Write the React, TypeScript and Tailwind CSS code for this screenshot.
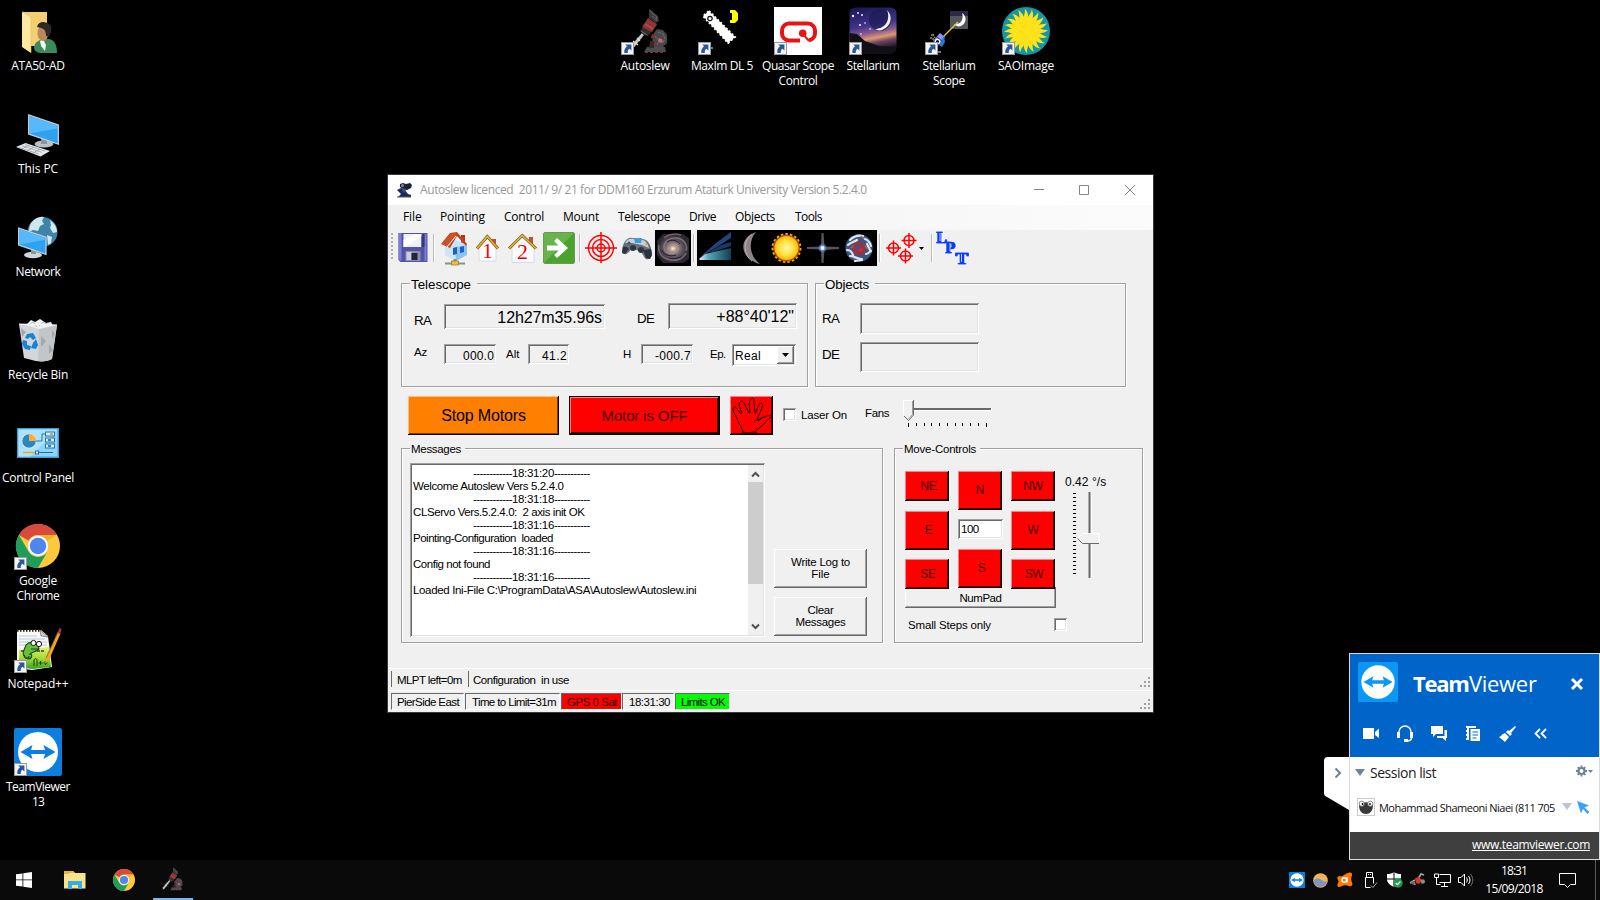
import type { ReactNode } from "react";

const SANS = "font-['Liberation_Sans',Arial,sans-serif]";
const SEGOE = "font-['Open_Sans','Noto_Sans',sans-serif]";
const SUNKEN =
  "shadow-[inset_1px_1px_#a0a0a0,inset_-1px_-1px_#ffffff,inset_2px_2px_#696969,inset_-2px_-2px_#e3e3e3]";
const RAISED =
  "shadow-[inset_-1px_-1px_#696969,inset_1px_1px_#ffffff,inset_-2px_-2px_#a0a0a0]";
const RED_BTN =
  "bg-[#ff0000] shadow-[inset_-1px_-1px_#000000,inset_1px_1px_#ff8080,inset_-2px_-2px_#5a0000]";

/* ---------- shared glyphs ---------- */

function ShortcutArrow() {
  return (
    <g transform="translate(0 35)">
      <rect x="0.5" y="0.5" width="12" height="12" fill="#f4f4f4" stroke="#9a9a9a" />
      <path d="M4.2 2.400h6.200v6.200L8.500 6.700C7 7.800 6.600 9 6.800 11H3.400C2.800 8.200 4 6 6.100 4.300Z" fill="#2b579a" />
    </g>
  );
}

function ChromeMark() {
  return (
    <g>
      <circle cx="24" cy="24" r="22" fill="#fdc93c" />
      <path d="M4.900 13A22 22 0 0 1 43 13H24a11 11 0 0 0-9.600 5.600Z" fill="#d8493e" />
      <path d="M4.900 13A22 22 0 0 0 24 46l9.500-16.500A11 11 0 0 1 14.500 29.500Z" fill="#1d9f5b" />
      <path d="M43 13H24l9.600 5.500Z" fill="#e9b32d" />
      <circle cx="24" cy="24" r="10.200" fill="#f4f6fb" />
      <circle cx="24" cy="24" r="8.200" fill="#4c87ee" />
    </g>
  );
}

function TeamViewerMark({ bg = "#0c7ede" }: { bg?: string }) {
  return (
    <g>
      <rect width="48" height="48" rx="2" fill={bg} />
      <circle cx="24" cy="24" r="20" fill="#fff" />
      <path d="M6.500 24 18.500 17l-1.500 5h14l-1.500-5L41.500 24l-12 7 1.500-5H17l1.500 5Z" fill={bg} />
    </g>
  );
}

function AutoslewMark() {
  return (
    <g>
      <path d="m21 26 2 2L11 43l-3 1 1-4Z" fill="#c4c6c8" />
      <path d="m12 34 5 4M16 31l3 3" stroke="#dadcde" strokeWidth="1.200" />
      <path d="m19 24 9-12 8 6-9 11-4-1Z" fill="#2e2e31" />
      <path d="m21 20 6-9 9 6-5 8Z" fill="#8f3535" />
      <path d="m24 17 8 5" stroke="#b24c4c" strokeWidth="1.500" />
      <path d="m20 24 6 4" stroke="#6b6b70" />
      <path d="m28 2 3 2 6 5 1 5-3 2-7-5Z" fill="#3a3a3e" />
      <path d="m29 3 2 3 5 4-1 4M31 9l4 3" stroke="#626268" fill="none" />
      <path d="m36 22 6 1 4 5v8l-5 5h-9l-1-6 2-9Z" fill="#46464b" />
      <path d="m37 25 5 2 2 5-3 5M34 29l4 5-2 4" stroke="#6e6e74" fill="none" strokeDasharray="3 1" />
      <path d="m38 31 3 1 1 3-3 1-2-2Z" fill="#c06a6a" />
      <path d="m31 27 3 1-1 4-3-1ZM34 35l2 1-1 3h-2Z" fill="#8d2b2b" />
      <path d="M26 40h18l1 5H23Z" fill="#4c4c50" />
      <path d="M24 45.500h20" stroke="#8f2d2d" strokeDasharray="3 2" />
      <path d="M29 34h4v7h-5z" fill="#2d2d31" />
    </g>
  );
}

/* ---------- desktop icons ---------- */

const desktopArt: Record<string, ReactNode> = {
  user: (
    <g>
      <path d="M9 5h24v34H9z" fill="#f3cf72" />
      <path d="m8 5 9 5v36l-9-6Z" fill="#fde7a1" />
      <path d="M8 5h1l8 5v36" stroke="#e8bf5c" strokeWidth=".6" fill="none" />
      <path d="M20 40c1-5 5-7 9-8h6c5 1 8 5 8 14H28c-5 0-8-2-8-6Z" fill="#3b8a5c" />
      <path d="m26 34 3-2 3 6-1 6-4-5Z" fill="#f1f4f4" />
      <ellipse cx="29" cy="26" rx="5.500" ry="8" fill="#b8895f" />
      <path d="M23 20c1-5 6-6 10-4 4 1 5 4 4 9l-2 5-3-1c0-5-1-8-9-9Z" fill="#2b2826" />
    </g>
  ),
  pc: (
    <g>
      <ellipse cx="30" cy="34" rx="9.500" ry="3.500" fill="#b9c2c8" />
      <path d="m27 28 6 2v4h-6z" fill="#8a949b" />
      <path d="m14 4 31 10.500v20.500L14 24.500Z" fill="#c5cdd2" />
      <path d="m15.200 5.800 28.500 9.700v17.700L15.200 23.500Z" fill="#2ba3f2" />
      <path d="m15.200 5.800 28.500 9.700v3L15.200 23.500Z" fill="#56b9fb" />
      <path d="m2 37 9.500-4L36 41l-9.500 5.500Z" fill="#e8eaec" />
      <path d="m5 37.500 20 6.500M8 35.800l20 6.500M11 34.500l20 6.500M8 39l7-4M13 41l7-4M19 43l7-4" stroke="#8f979c" strokeWidth=".7" />
    </g>
  ),
  network: (
    <g>
      <circle cx="28.500" cy="19" r="15" fill="#3f84a8" />
      <path d="M17 10c4-5 9-7 13-6l-2 4 2 3-4 2-2 5-5-1-4 2c0-4 1-7 2-9ZM36 7c4 3 7 7 7 12l-4 1-3-5 1-3ZM33 22l5 2-1 6-3 2Z" fill="#cfe8ef" />
      <ellipse cx="19" cy="42" rx="9" ry="3.200" fill="#cfd5d9" />
      <path d="M17 36h5v5h-5z" fill="#8a949b" />
      <path d="m4 14.200 28.600 9.600v18.400L4 32.600Z" fill="#c5cdd2" />
      <path d="m5.200 16 26.200 8.800v15.600L5.200 31.600Z" fill="#2ba3f2" />
      <path d="m5.200 16 26.200 8.800v2L5.200 31.600Z" fill="#56b9fb" />
    </g>
  ),
  recycle: (
    <g>
      <path d="m5 8 38 1-5 34c-4 3-16 3-20 1l-8-2Z" fill="#d3d6d8" />
      <path d="m5 8 38 1-18 3Z" fill="#f2f3f4" />
      <path d="m25 12 18-3-5 34c-4 2-9 3-14 2Z" fill="#c3c6c9" />
      <path d="m12 9 5-5 4 2 5-3 6 4 5-1 2 4-14 3Z" fill="#eef0f1" />
      <path d="m15 9 4-3 4 5M25 10l4-4 6 3" stroke="#b6babd" fill="none" />
      <path d="m38 14 3 4-3 5ZM35 28l4 6-4 4ZM27 20l5 5-5 6ZM7 12l5 4-4 5Z" fill="#a4a8ab" />
      <path d="m5 8 38 1" stroke="#f6f6f6" strokeWidth="1.200" />
      <g fill="#1683d8">
        <path d="m13 18 6-1 3 5-3 2-3-3-2 2-3-1Z" />
        <path d="m22 23 2 6-2 4-5-1 2-5Z" />
        <path d="m9 24 4 1v4l4 1-1 4-5-1-3-5Z" />
      </g>
    </g>
  ),
  panel: (
    <g>
      <rect x="3" y="9" width="42" height="30" fill="#3aa0dc" />
      <rect x="4.500" y="10.500" width="39" height="27" fill="#8fd4f7" />
      <path d="M4.500 10.500h39l-27 27h-12Z" fill="#aee2fb" />
      <circle cx="15" cy="22" r="7.200" fill="#2c86c4" stroke="#e9f6fd" strokeWidth=".8" />
      <path d="M15 22v-7.200a7.200 7.200 0 0 1 7.200 7.200Z" fill="#fbb030" />
      <path d="M22 22h6v-7h3" stroke="#2476ae" fill="none" />
      <g fill="#cfeefd" stroke="#2476ae">
        <rect x="31.500" y="13" width="9" height="4" />
        <rect x="31.500" y="19" width="9" height="4" />
        <rect x="31.500" y="25" width="9" height="4" />
      </g>
      <path d="M36 15h3" stroke="#f28a1c" strokeWidth="1.500" />
      <path d="M34 21h3M34 27h3" stroke="#135a94" strokeWidth="1.500" />
      <path d="M9 33.500h14" stroke="#f7a11b" strokeWidth="1.500" />
      <path d="M23 33.500h16" stroke="#1d6ca8" />
      <rect x="21.500" y="32" width="3" height="3" fill="#fff" stroke="#1d6ca8" />
    </g>
  ),
  chrome: <ChromeMark />,
  notepad: (
    <g>
      <defs>
        <linearGradient id="grass" x1="0" y1="0" x2="0" y2="1">
          <stop offset="0" stopColor="#e4f26a" />
          <stop offset=".5" stopColor="#a4dc34" />
          <stop offset="1" stopColor="#36a324" />
        </linearGradient>
      </defs>
      <path d="M3 5h24l7 6 4 31-20 3-15-2Z" fill="#f7f7f4" />
      <path d="M3 5.500h23" stroke="#222" strokeWidth="2.500" strokeDasharray="1.500 1.500" />
      <path d="m26 5 1 6 7 1Z" fill="#cfcfcf" stroke="#555" strokeWidth=".6" />
      <path d="M5 11h18M5 14h26M5 17h28M5 20h28" stroke="#a8c4d8" strokeWidth=".8" />
      <path d="m5 25 30-3 2 20-19 2-13-2Z" fill="url(#grass)" />
      <path d="M7 26h24" stroke="#4a3a52" strokeWidth="1.500" strokeDasharray="3 1" />
      <path d="M12 20c3-4 9-3 12 0l1 4c-3 3-7 3-9 5 3 0 2 5-2 5-4-1-6-5-4-9Z" fill="#68bf3d" stroke="#1d4a12" strokeWidth="1.100" />
      <path d="M10 30c1 4 5 4 5 1M17 24h8" stroke="#1d4a12" fill="none" strokeWidth="1.200" />
      <g fill="#fff" stroke="#111" strokeWidth="1">
        <circle cx="19.500" cy="18" r="2.600" />
        <circle cx="25" cy="19" r="2.600" />
      </g>
      <path d="M20 41v-6c1-2 3-2 3 1v5M24.500 38h4M26.500 36v4M29.500 38h4M31.500 36v4" stroke="#143d0c" fill="none" />
      <path d="m32 33 12-26 2.500 1.500L35 35l-4 4Z" fill="#f0a52a" />
      <path d="m32 33 12-26" stroke="#8a5a12" strokeWidth=".8" />
      <path d="m43.500 8 2-5 2 1-1.500 5Z" fill="#a04040" />
    </g>
  ),
  teamviewer: <TeamViewerMark />,
  autoslew: <AutoslewMark />,
  maxim: (
    <g>
      <path d="m11 4 26 26-7 6L5 9Z" fill="#fff" />
      <path d="m11 4 26 26-7 6L5 9Z" fill="none" stroke="#fff" strokeDasharray="2 2" strokeWidth="2" />
      <circle cx="12" cy="11.500" r="2.200" fill="#fff" stroke="#111" strokeWidth="1.200" />
      <path d="M32 3h5l3 3v7l-3 3h-5v-3h2V6h-2Z" fill="#ff0" />
      <path d="M12 41h3" stroke="#0aa" strokeWidth="2" />
    </g>
  ),
  quasar: (
    <g>
      <rect width="48" height="48" fill="#fff" />
      <path d="M26 33.500H15a7 7 0 0 1-7-7v-3a7 7 0 0 1 7-7h19a7 7 0 0 1 7 7v3a7 7 0 0 1-6 6.700" fill="none" stroke="#e81414" strokeWidth="4" />
      <circle cx="28.700" cy="26.300" r="3.800" fill="#e81414" />
      <path d="m29 27 6 7" stroke="#e81414" strokeWidth="2" />
    </g>
  ),
  stellarium: (
    <g>
      <defs>
        <linearGradient id="sky" x1="0" y1="0" x2="0.200" y2="1">
          <stop offset="0" stopColor="#17164f" />
          <stop offset=".45" stopColor="#40328a" />
          <stop offset=".62" stopColor="#8a5a8e" />
          <stop offset=".74" stopColor="#e09a72" />
          <stop offset=".84" stopColor="#6b4560" />
          <stop offset="1" stopColor="#1b1620" />
        </linearGradient>
      </defs>
      <rect x=".500" y=".500" width="47" height="46" rx="6" fill="url(#sky)" />
      <path d="M.5 26 8 27l8 7 14 5 17 1v1a6 6 0 0 1-6 6H6.500a6 6 0 0 1-6-6Z" fill="#121016" />
      <circle cx="31" cy="13" r="11" fill="#1b1b56" opacity=".7" />
      <path d="M38 3c6 6 5 16-5 20-3 1-5 0-7-1 10 0 16-9 12-19Z" fill="#f6f4ee" />
      <g fill="#fff">
        <circle cx="4" cy="9" r="1.200" />
        <circle cx="9" cy="6" r=".9" />
        <circle cx="13" cy="8" r=".9" />
        <circle cx="11" cy="18" r="1" />
        <circle cx="16" cy="16" r=".8" />
        <circle cx="12" cy="27" r=".8" />
        <circle cx="21" cy="22" r=".8" />
      </g>
    </g>
  ),
  scope: (
    <g>
      <rect x="25" y="4" width="18" height="18" fill="#55555a" />
      <path d="M25 4h18v5H25z" fill="#2b2747" />
      <path d="M37 6c5 3 5 10-1 13-3 1-5 0-7-2 7 1 10-5 8-11Z" fill="#fff" />
      <path d="M18 30 33 15" stroke="#d8cf3e" strokeWidth="1.300" />
      <path d="m8 34 7-8 5 4-6 8Z" fill="#8f93f5" />
      <path d="m14 38 5-9 1 6-3 5Z" fill="#1f7fd0" />
      <path d="m9 33 5 5M12 30l5 4" stroke="#3f49c8" strokeWidth="1.200" />
      <path d="M6 28h3M5 31h3v3M8 27l2 4" stroke="#ddd23a" fill="none" strokeDasharray="2 1" />
      <circle cx="12.500" cy="34.500" r="2.200" fill="#111" stroke="#fff" strokeWidth="1.200" />
      <path d="M13 45h3" stroke="#777" strokeWidth="2" />
    </g>
  ),
  sao: (
    <g>
      <circle cx="24" cy="24" r="24" fill="#1297a8" />
      <g fill="#ffe21a">
        {Array.from({ length: 20 }, (_, i) => (
          <path key={i} d="M21.400 13C21.600 8 23.600 6 22.800 1.800 26 5 26.400 8 26.600 13Z" transform={`rotate(${i * 18} 24 24)`} />
        ))}
        <circle cx="24" cy="24" r="13.500" />
      </g>
    </g>
  ),
};

type Shortcut = { art: string; lines: [string, string][]; left: string; top: string; link?: boolean };

const shortcuts: Shortcut[] = [
  { art: "user", lines: [["ATA50-AD", "tracking-[-0.27px]"]], left: "left-0", top: "top-[7px]" },
  { art: "pc", lines: [["This PC", "tracking-[-0.09px]"]], left: "left-0", top: "top-[110px]" },
  { art: "network", lines: [["Network", "tracking-[-0.4px]"]], left: "left-0", top: "top-[213px]" },
  { art: "recycle", lines: [["Recycle Bin", "tracking-[-0.24px]"]], left: "left-0", top: "top-[316px]" },
  { art: "panel", lines: [["Control Panel", "tracking-[-0.28px]"]], left: "left-0", top: "top-[419px]" },
  { art: "chrome", lines: [["Google", "tracking-[-0.24px]"], ["Chrome", "tracking-[-0.31px]"]], left: "left-0", top: "top-[522px]", link: true },
  { art: "notepad", lines: [["Notepad++", "tracking-[-0.15px]"]], left: "left-0", top: "top-[625px]", link: true },
  { art: "teamviewer", lines: [["TeamViewer", "tracking-[-0.5px]"], ["13", "tracking-[-0.9px]"]], left: "left-0", top: "top-[728px]", link: true },
  { art: "autoslew", lines: [["Autoslew", "tracking-[-0.28px]"]], left: "left-[607px]", top: "top-[7px]", link: true },
  { art: "maxim", lines: [["MaxIm DL 5", "tracking-[-0.43px]"]], left: "left-[684px]", top: "top-[7px]", link: true },
  { art: "quasar", lines: [["Quasar Scope", "tracking-[-0.45px]"], ["Control", "tracking-[-0.37px]"]], left: "left-[760px]", top: "top-[7px]", link: true },
  { art: "stellarium", lines: [["Stellarium", "tracking-[-0.37px]"]], left: "left-[835px]", top: "top-[7px]", link: true },
  { art: "scope", lines: [["Stellarium", "tracking-[-0.37px]"], ["Scope", "tracking-[-0.33px]"]], left: "left-[911px]", top: "top-[7px]", link: true },
  { art: "sao", lines: [["SAOImage", "tracking-[-0.24px]"]], left: "left-[988px]", top: "top-[7px]", link: true },
];

function DesktopIcon({ art, lines, left, top, link }: Shortcut) {
  return (
    <div className={`absolute flex w-[76px] flex-col items-center ${left} ${top}`}>
      <svg width="48" height="48" viewBox="0 0 48 48">
        {desktopArt[art]}
        {link && <ShortcutArrow />}
      </svg>
      <div className="mt-[3px] text-center text-[12px] leading-[15px] whitespace-nowrap text-white">
        {lines.map(([text, tracking]) => (
          <div key={text} className={tracking}>{text}</div>
        ))}
      </div>
    </div>
  );
}

/* ---------- window chrome ---------- */

function TitleBar() {
  return (
    <div className="flex h-[30px] items-center bg-white">
      <svg className="ml-[8px]" width="17" height="16" viewBox="0 0 17 16">
        <path d="m4 2 3-1 3 1 4-1 2 2-1 3-4 2-4-1-3-2Z" fill="#1b2138" />
        <path d="m1 8 4-2 4 2 3 4 3 1v2H2l3-3Z" fill="#1a2a55" />
        <path d="m7 6 3 1-1 4-3-2Z" fill="#35508f" />
        <circle cx="6.500" cy="3.500" r="1.500" fill="#7d8aa8" />
        <path d="M1 15h14" stroke="#555" />
      </svg>
      <span className="ml-[7px] text-[12px] leading-[16px] tracking-[-0.4px] whitespace-pre text-[#999999]">
        {"Autoslew licenced  2011/ 9/ 21 for DDM160 Erzurum Ataturk University Version 5.2.4.0"}
      </span>
      <svg className="mr-[17px] ml-auto" width="102" height="12" viewBox="0 0 102 12" fill="none" stroke="#858585">
        <path d="M0 5.500h10M45.500 1.500h9v9h-9zM91 1l10 10M101 1 91 11" />
      </svg>
    </div>
  );
}

const menu: [string, string][] = [
  ["File", "w-[37px] tracking-[-0.12px]"],
  ["Pointing", "w-[64px] tracking-[-0.13px]"],
  ["Control", "w-[59px] tracking-[-0.22px]"],
  ["Mount", "w-[55px] tracking-[-0.2px]"],
  ["Telescope", "w-[71px] tracking-[-0.43px]"],
  ["Drive", "w-[46px] tracking-[-0.47px]"],
  ["Objects", "w-[60px] tracking-[-0.31px]"],
  ["Tools", "w-[46px] tracking-[-0.56px]"],
];

function MenuBar() {
  return (
    <div className="flex h-[25px] items-center bg-gradient-to-r from-[#f0f0f0] to-[#fbfbfb] pb-[2px] pl-[15px] text-[12px] leading-[17px] text-black">
      {menu.map(([name, style]) => (
        <span key={name} className={style}>{name}</span>
      ))}
    </div>
  );
}

function Tool({ children, className = "w-[36px]" }: { children: ReactNode; className?: string }) {
  return <svg className={`h-[36px] shrink-0 ${className}`}>{children}</svg>;
}

function Divider() {
  return (
    <div className="flex h-[36px] w-[6px] justify-center py-[4px]">
      <div className="w-[2px] border-r border-l border-r-white border-l-[#bdbdbd]" />
    </div>
  );
}

function Target({ x, y }: { x: number; y: number }) {
  return (
    <g transform={`translate(${x} ${y})`} stroke="#f00" strokeWidth="1.500" fill="none">
      <circle r="5" />
      <path d="M-7.500 0h15M0-7.500v15" />
    </g>
  );
}

function Toolbar() {
  return (
    <div className="flex h-[37px] items-start bg-[#f0f0f0] pl-[2px]">
      <svg width="5" height="36">
        <path d="M2 3v28" stroke="#b0b0b0" strokeWidth="2" strokeDasharray="2 2" />
      </svg>
      <Tool>
        <g transform="translate(-.5 0)">
          <path d="M4 3h29v29H6l-2-2Z" fill="#5252a8" />
          <path d="M4 3h3v28l-3-2ZM30 4h2v27h-2z" fill="#7d7fd0" />
          <path d="M9 4h18v13H9z" fill="#eef1fb" />
          <path d="M27 4h3v13h-3z" fill="#37378a" />
          <path d="M9 10 21 4h6v2L11 17H9Z" fill="#fff" />
          <path d="M11 21h15v10H11z" fill="#8c93a8" />
          <path d="M12 22h5v8h-5z" fill="#c9ceda" />
          <path d="M17 23h6v7h-6z" fill="#23233c" />
        </g>
      </Tool>
      <Divider />
      <Tool>
        <path d="M24 5h4v9h-4z" fill="#b4391c" />
        <path d="M8 17 13 7l17 8v10l-11 6-11-6Z" fill="#c8e6f8" />
        <path d="m18 17 12-2v10l-11 6Z" fill="#8cc4ec" />
        <path d="m4 14 9-11 7-1 10 12-1 2-9-10-7 12Z" fill="#c2411d" />
        <path d="m5 14 9-11h6L12 17Z" fill="#cc5228" />
        <path d="m10 17 9-11" stroke="#fff" />
        <path d="m16 18 4-1v7l-4 1zM23 17l4-1v6l-4 1z" fill="#1f5fc4" />
        <path d="M18 29v3" stroke="#8b8f95" strokeWidth="3" />
        <path d="M8 33.500h20" stroke="#8b8f95" strokeWidth="2" />
        <rect x="14.500" y="31" width="7" height="4" fill="#f0c22d" stroke="#8c7117" strokeWidth=".6" />
      </Tool>
      <Tool className="w-[34px]">
        <path d="M19 9h4v7h-4z" fill="#c94b37" />
        <path d="M6 17 14.300 8 23 17v14H6Z" fill="#fbfbff" stroke="#cfd3e6" strokeWidth=".8" />
        <path d="M4 18.500 14.300 6.500 25 18.500" fill="none" stroke="#7a5a10" strokeWidth="3" />
        <path d="M4 18.500 14.300 6.500 25 18.500" fill="none" stroke="#e5b33b" strokeWidth="1.600" />
        <text x="14.500" y="28" textAnchor="middle" fontSize="20" fill="#e80000" className="font-['Liberation_Serif',serif]">1</text>
      </Tool>
      <Tool className="w-[34px]">
        <path d="M22 7h4v9h-4z" fill="#c94b37" />
        <path d="M5 17 15.300 6 27 17v15.500H5Z" fill="#fbfbff" stroke="#cfd3e6" strokeWidth=".8" />
        <path d="M2 18.500 15.300 5.500 29 18.500" fill="none" stroke="#7a5a10" strokeWidth="3" />
        <path d="M2 18.500 15.300 5.500 29 18.500" fill="none" stroke="#e5b33b" strokeWidth="1.600" />
        <text x="15.500" y="29" textAnchor="middle" fontSize="22" fill="#e80000" className="font-['Liberation_Serif',serif]">2</text>
      </Tool>
      <Tool>
        <rect x="2.500" y="2.500" width="31" height="31" rx="1.500" fill="#4aa32d" stroke="#6b9a58" />
        <path d="M3 3h30L3 33Z" fill="#7fbf5e" opacity=".6" />
        <path d="M6 15.500h11.500L13 11l3-3 11 10-11 10-3-3 4.500-4.500H6Z" fill="#fff" />
      </Tool>
      <Divider />
      <Tool>
        <g fill="none" stroke="#f00" strokeWidth="1.500">
          <circle cx="18" cy="18" r="12.500" />
          <circle cx="18" cy="18" r="8.500" />
          <circle cx="18" cy="18" r="4" />
          <path d="M2 18h32M18 2v31" />
        </g>
      </Tool>
      <Tool>
        <path d="M3 21C4 12 8 7 13 8l10 1c6 0 9 6 10 14 0 5-3 7-6 6-3-2-3-6-6-8l-8-2c-3 2-4 6-8 5-2-1-2-2-2-3Z" fill="#66717f" />
        <path d="M6 13c2-4 5-5 8-4l10 1c3 1 5 4 6 8l-7-3-10-2Z" fill="#c6cfda" />
        <path d="M4 17c2-1 5 0 6 2l-4 5-3-1ZM24 20l8-1 1 6-2 4-4-1Z" fill="#2d333c" />
        <path d="M15 8h8l-1 5h-6z" fill="#3ba0d6" />
        <circle cx="14" cy="18" r="3" fill="#30363f" />
        <circle cx="22" cy="20" r="3" fill="#30363f" />
        <circle cx="27" cy="14" r="1.200" fill="#e4b52e" />
        <circle cx="10" cy="13" r="1.500" fill="#47505c" />
      </Tool>
      <Tool className="w-[36px] bg-black">
        <defs>
          <radialGradient id="galaxy">
            <stop offset="0" stopColor="#fff4dc" />
            <stop offset=".2" stopColor="#b39a8c" />
            <stop offset=".6" stopColor="#5d5260" />
            <stop offset="1" stopColor="#2b2730" />
          </radialGradient>
        </defs>
        <path d="M8 4h20l6 4v21l-6 4H8l-6-8V11Z" fill="url(#galaxy)" />
        <g fill="none" stroke="#a8979c" opacity=".55" strokeWidth="1.400">
          <path d="M18 14c5 0 7 4 4 7-4 4-12 3-13-3S15 7 22 8s11 7 9 13M9 8c4-4 12-5 17-3" />
          <path d="M18 22c-4 0-6-2-5-5M4 15c-2 8 4 14 12 15 7 1 13-2 15-7" />
        </g>
        <path d="M7 20c1 5 8 7 14 5M12 12c4-3 10-2 13 2M27 26c-4 3-9 3-13 2" fill="none" stroke="#221d29" />
      </Tool>
      <Divider />
      <div className="flex bg-black">
        <Tool>
          <defs>
            <linearGradient id="tail" x1="0" x2="1">
              <stop offset="0" stopColor="#d8fbff" />
              <stop offset=".3" stopColor="#55a5b8" />
              <stop offset="1" stopColor="#123f52" />
            </linearGradient>
          </defs>
          <path d="m3 27 16-14L34 2v6L20 17Z" fill="#25457a" />
          <path d="m12 22 12-7 10-3v4l-18 6Z" fill="#1b3564" />
          <path d="m2 29 6-5 26-6v12H3Z" fill="url(#tail)" />
        </Tool>
        <Tool>
          <path d="M23 2C5 8 6 28 27 34 16 26 15 11 23 2Z" fill="#8f8589" />
          <path d="M19 4c-9 6-9 21 0 27" stroke="#bdb3b6" fill="none" />
        </Tool>
        <Tool>
          <defs>
            <radialGradient id="sun">
              <stop offset="0" stopColor="#fff9a8" />
              <stop offset=".6" stopColor="#ffdf3c" />
              <stop offset="1" stopColor="#ffae00" />
            </radialGradient>
          </defs>
          <circle cx="17.500" cy="18" r="13.700" fill="none" stroke="#f6a800" strokeWidth="2.500" strokeDasharray="2.500 2" />
          <circle cx="17.500" cy="18" r="12.700" fill="url(#sun)" stroke="#b94d00" strokeWidth="1.300" />
        </Tool>
        <Tool>
          <path d="M16.500 3h2l1 13.500L34 17v2l-14.500 1-1 13h-2L16 19.500 2 19v-2l14-.5Z" fill="#55555c" />
          <circle cx="17.500" cy="18" r="3.800" fill="#5c8ee8" opacity=".8" />
          <circle cx="17.500" cy="18" r="2" fill="#fff" />
        </Tool>
        <Tool>
          <circle cx="18" cy="18" r="13.700" fill="#3c5680" />
          <g fill="none" stroke="#dfe5ee" strokeWidth="2.200" strokeLinecap="round">
            <path d="M9 10c3-3 8-5 13-4M7 15c3-3 6-3 9-5M24 9c3 1 5 4 6 7M6 20c3 0 5 2 6 5M9 26c4 0 7 3 12 3M25 24c2 0 3-2 5-3M14 31l7-1M26 14l3 6" />
          </g>
          <path d="m10 18 4-3M24 16l3 3M20 6l3 3" stroke="#a46e52" strokeWidth="1.500" />
          <circle cx="18" cy="18.500" r="5" fill="none" stroke="#f01010" strokeWidth="2" />
          <circle cx="19.500" cy="20" r="1.800" fill="#e22" />
        </Tool>
      </div>
      <Divider />
      <Tool>
        <Target x={10.500} y={18} />
        <Target x={26} y={10.500} />
        <Target x={22.500} y={26} />
      </Tool>
      <svg width="10" height="36">
        <path d="M0 17h5l-2.500 3Z" fill="#000" />
      </svg>
      <Divider />
      <Tool className="w-[36px] drop-shadow-[1px_0_#ffffff]">
        <g
          className="font-['Liberation_Serif',serif] font-bold drop-shadow-[1px_0_#0a3cff]"
          fontSize="16"
          fill="#0a3cff"
          stroke="#0a3cff"
          strokeWidth=".5"
        >
          <text x="1" y="12.500">L</text>
          <text x="10" y="23">P</text>
          <text x="20" y="33.500" textLength="13" lengthAdjust="spacingAndGlyphs">T</text>
        </g>
        <path d="M5 3v8M15 13v8M26.500 24v8" stroke="#e8eeff" strokeWidth=".8" />
      </Tool>
    </div>
  );
}

/* ---------- form widgets ---------- */

function Group({ title, titleClass, className, children }: { title: string; titleClass: string; className: string; children: ReactNode }) {
  return (
    <div className={`relative border border-[#a0a0a0] shadow-[1px_1px_#ffffff,inset_1px_1px_#ffffff] ${className}`}>
      <span className={`absolute bg-[#f0f0f0] whitespace-nowrap ${titleClass}`}>{title}</span>
      {children}
    </div>
  );
}

function Field({ children, className }: { children?: ReactNode; className: string }) {
  return <div className={`flex shrink-0 justify-end ${SUNKEN} ${className}`}>{children}</div>;
}

function Checkbox({ className = "" }: { className?: string }) {
  return <div className={`h-[13px] w-[13px] shrink-0 bg-white ${SUNKEN} ${className}`} />;
}

function TelescopeGroup() {
  return (
    <Group
      title="Telescope"
      titleClass="-top-[7px] left-[8px] w-[67px] pl-[1px] text-[13.33px] leading-[16px]"
      className="h-[104px] w-[407px] pt-[19px] pl-[12px]"
    >
      <div className="flex items-start text-[13.33px] leading-[16px]">
        <span className="mt-[10px] w-[30px] tracking-[-0.51px]">RA</span>
        <Field className="mt-[1px] h-[25px] w-[161px] pt-[5px] pr-[3px] text-[16px] leading-[18px] tracking-[-0.1px]">12h27m35.96s</Field>
        <span className="mt-[8px] ml-[32px] w-[31px] tracking-[-0.51px]">DE</span>
        <Field className="h-[26px] w-[129px] pt-[5px] pr-[3px] text-[16px] leading-[18px] tracking-[-0.02px]">+88°40'12"</Field>
      </div>
      <div className="mt-[15px] flex items-start text-[11.5px] leading-[13px]">
        <span className="mt-[2px] w-[30px] tracking-[-0.21px]">Az</span>
        <Field className="h-[20px] w-[52px] pt-[6px] pr-[2px] text-[12px] tracking-[0.19px]">000.0</Field>
        <span className="mt-[4px] ml-[10px] w-[22px]">Alt</span>
        <Field className="h-[20px] w-[41px] pt-[6px] pr-[2px] text-[12px] tracking-[0.41px]">41.2</Field>
        <span className="mt-[4px] ml-[54px] w-[18px]">H</span>
        <Field className="h-[20px] w-[52px] pt-[6px] pr-[2px] text-[12px] tracking-[0.33px]">-000.7</Field>
        <span className="mt-[4px] ml-[17px] w-[22px] tracking-[-0.5px]">Ep.</span>
        <div className={`flex h-[22px] w-[64px] justify-between bg-white p-[2px] ${SUNKEN}`}>
          <span className="pt-[4px] pl-[1px] text-[12px] tracking-[0.33px]">Real</span>
          <span className={`flex w-[17px] items-center justify-center bg-[#f0f0f0] ${RAISED}`}>
            <svg width="7" height="4"><path d="M0 0h7L3.500 4Z" /></svg>
          </span>
        </div>
      </div>
    </Group>
  );
}

function ObjectsGroup() {
  return (
    <Group
      title="Objects"
      titleClass="-top-[7px] left-[8px] w-[51px] pl-[1px] text-[13.33px] leading-[16px] tracking-[-0.17px]"
      className="ml-[7px] h-[104px] w-[311px] pt-[19px] pl-[6px]"
    >
      <div className="flex items-start text-[13.33px] leading-[16px] tracking-[-0.51px]">
        <span className="mt-[8px] w-[38px]">RA</span>
        <Field className="h-[31px] w-[119px]" />
      </div>
      <div className="mt-[8px] flex items-start text-[13.33px] leading-[16px] tracking-[-0.51px]">
        <span className="mt-[5px] w-[38px]">DE</span>
        <Field className="h-[30px] w-[119px]" />
      </div>
    </Group>
  );
}

function MotorRow() {
  return (
    <div className="mt-[9px] flex h-[39px] items-start pl-[20px] text-[11.5px] leading-[13px]">
      <button className="h-[39px] w-[151px] bg-[#ff8000] text-[16px] tracking-[-0.16px] shadow-[inset_-1px_-1px_#000000,inset_1px_1px_#ffc080,inset_-2px_-2px_#804000]">
        Stop Motors
      </button>
      <button className="ml-[10px] h-[39px] w-[151px] border border-black bg-[#ff0000] text-[15px] tracking-[-0.13px] text-[#400000] shadow-[inset_-1px_-1px_#000000,inset_1px_1px_#ff8080,inset_-2px_-2px_#5a0000]">
        Motor is OFF
      </button>
      <button className={`ml-[10px] h-[39px] w-[43px] ${RED_BTN}`}>
        <svg width="43" height="39" viewBox="0 0 43 39" fill="none" stroke="#000" strokeWidth=".9">
          <path d="M13 37c0-5-4-8-5-12-1-4-5-8-5-12 1-3 3-2 4 0l4 5 1-1c-2-5-4-9-2-11s4 0 5 3l4 8h1c0-5-2-11 1-14 2-2 3 0 3 3l1 11h1c1-4 2-9 5-10 2 0 2 2 1 5l-4 9c-1 4 0 4 3 2 4-3 8-4 11-3-4 3-8 9-14 13-3 2-3 2-3 4M12 36l6 1 5-1 4 1M24 25c4-1 6-2 9-4" />
        </svg>
      </button>
      <Checkbox className="mt-[12px] ml-[10px]" />
      <span className="mt-[13px] ml-[5px] w-[64px] tracking-[-0.16px]">Laser On</span>
      <span className="mt-[11px] w-[35px] tracking-[-0.39px]">Fans</span>
      <svg className="mt-[3px]" width="96" height="32" viewBox="0 0 96 32">
        <path d="M5 10h86" stroke="#696969" strokeWidth="2" />
        <path d="M5 11.500h86.500V9" stroke="#fff" fill="none" />
        <path d="M3.500 1.500h10V16l-5 5-5-5Z" fill="#f0f0f0" />
        <path d="M13.500 1v15l-5 5.500L4 17" fill="none" stroke="#696969" />
        <path d="M12.500 2v13.500l-4 4.500" fill="none" stroke="#a0a0a0" />
        <path d="M3.500 16V1.500H13" fill="none" stroke="#fff" />
        <path d="M8.500 24v4M16.500 24v3M24.500 24v3M31.500 24v3M39.500 24v3M47.500 24v3M55.500 24v3M62.500 24v3M70.500 24v3M78.500 24v3M86.500 24v4" stroke="#000" />
      </svg>
    </div>
  );
}

const log: { time: string; text: string; style: string }[] = [
  { time: "18:31:20", text: "Welcome Autoslew Vers 5.2.4.0", style: "tracking-[-0.38px]" },
  { time: "18:31:18", text: "CLServo Vers.5.2.4.0:  2 axis init OK", style: "tracking-[-0.41px]" },
  { time: "18:31:16", text: "Pointing-Configuration  loaded", style: "tracking-[-0.49px]" },
  { time: "18:31:16", text: "Config not found", style: "tracking-[-0.46px]" },
  { time: "18:31:16", text: "Loaded Ini-File C:\\ProgramData\\ASA\\Autoslew\\Autoslew.ini", style: "tracking-[-0.34px]" },
];

function MessagesGroup() {
  return (
    <Group
      title="Messages"
      titleClass="-top-[6px] left-[8px] w-[55px] pl-[1px] text-[11.5px] leading-[13px] tracking-[-0.3px]"
      className="flex h-[195px] w-[482px] items-start pl-[8px] text-[11.5px] leading-[13px]"
    >
      <div className={`mt-[14px] flex h-[174px] w-[355px] justify-between bg-white p-[2px] ${SUNKEN}`}>
        <div className="pt-[2px] pl-[1px] whitespace-pre">
          {log.map((entry, i) => (
            <div key={i}>
              <div className="pl-[60px]">
                <span className="tracking-[-0.58px]">------------</span>
                <span className="tracking-[-0.35px]">{entry.time}</span>
                <span className="tracking-[-0.58px]">-----------</span>
              </div>
              <div className={entry.style}>{entry.text}</div>
            </div>
          ))}
        </div>
        <div className="flex w-[15px] flex-col bg-[#f0f0f0]">
          <svg width="15" height="17" fill="none" stroke="#505050" strokeWidth="2">
            <path d="m4 11.500 3.500-3.500 3.500 3.500" />
          </svg>
          <div className="h-[102px] bg-[#cdcdcd]" />
          <svg className="mt-auto" width="15" height="17" fill="none" stroke="#505050" strokeWidth="2">
            <path d="m4 6.500 3.500 3.500L11 6.500" />
          </svg>
        </div>
      </div>
      <div className="mt-[100px] ml-[9px] flex flex-col gap-[9px] leading-[12px]">
        <button className={`h-[39px] w-[93px] pb-[2px] ${RAISED}`}>
          <div className="tracking-[-0.23px]">Write Log to</div>
          <div>File</div>
        </button>
        <button className={`h-[39px] w-[93px] pb-[2px] tracking-[-0.3px] ${RAISED}`}>
          <div>Clear</div>
          <div>Messages</div>
        </button>
      </div>
    </Group>
  );
}

function Pad({ label, className }: { label: string; className: string }) {
  return <button className={`w-[44px] text-[12px] tracking-[-0.3px] text-[#3c0000] ${RED_BTN} ${className}`}>{label}</button>;
}

function MoveGroup() {
  return (
    <Group
      title="Move-Controls"
      titleClass="-top-[6px] left-[8px] w-[77px] pl-[1px] text-[11.5px] leading-[13px] tracking-[-0.21px]"
      className="ml-[11px] flex h-[195px] w-[249px] items-start pt-[22px] pl-[10px] text-[11.5px] leading-[13px]"
    >
      <div className="w-[162px]">
        <div className="relative z-10 flex items-start gap-[9px]">
          <div className="flex flex-col">
            <Pad label="NE" className="h-[30px] pl-[3px]" />
            <Pad label="E" className="mt-[10px] h-[39px] pl-[3px]" />
            <Pad label="SE" className="mt-[9px] h-[30px] pl-[2px]" />
          </div>
          <div className="flex flex-col">
            <Pad label="N" className="h-[39px]" />
            <div className={`mt-[9px] h-[20px] w-[45px] bg-white pt-[4px] pl-[3px] tracking-[-0.5px] ${SUNKEN}`}>100</div>
            <Pad label="S" className="mt-[10px] h-[39px] pl-[3px]" />
          </div>
          <div className="-ml-px flex flex-col">
            <Pad label="NW" className="h-[30px]" />
            <Pad label="W" className="mt-[10px] h-[39px]" />
            <Pad label="SW" className="mt-[9px] h-[30px] pl-[2px]" />
          </div>
        </div>
        <button className={`-mt-[2px] block h-[21px] w-[151px] pt-[2px] tracking-[-0.46px] ${RAISED}`}>NumPad</button>
        <div className="mt-[10px] flex items-start">
          <span className="mt-px ml-[3px] w-[146px] tracking-[-0.17px]">Small Steps only</span>
          <Checkbox />
        </div>
      </div>
      <div className="-ml-[2px] flex flex-col">
        <span className="mt-[5px] text-[12px] tracking-[0.05px]">0.42 °/s</span>
        <svg className="mt-[3px]" width="40" height="90" viewBox="0 0 40 90">
          <path d="M9.500 1v82" stroke="#000" strokeWidth="3" strokeDasharray="1 3" />
          <path d="M24.500 0v86" stroke="#696969" strokeWidth="2" />
          <path d="M23 86.500h3.500V0" fill="none" stroke="#fff" />
          <path d="M12.500 46.500 18 41.500h16v9.500H17Z" fill="#f0f0f0" />
          <path d="M12.500 46.500 17.500 41.500H34v9" fill="none" stroke="#fff" />
          <path d="m12.500 46.500 5 5H34" fill="none" stroke="#696969" />
        </svg>
      </div>
    </Group>
  );
}

function Grip() {
  return (
    <svg className="mr-[2px] ml-auto" width="11" height="11" fill="#a0a0a0">
      <path d="M8 0h2v2H8zM4 4h2v2H4zM8 4h2v2H8zM0 8h2v2H0zM4 8h2v2H4zM8 8h2v2H8z" />
    </svg>
  );
}

function StatusBars() {
  const cell = "mt-[2px] h-[17px] border-t border-l border-t-[#696969] border-l-[#696969] border-r border-b border-r-white border-b-white pt-[2px]";
  return (
    <div className="text-[11.5px] leading-[13px] whitespace-pre">
      <div className="flex h-[22px] items-start border-t border-white">
        <span className="mt-[2px] ml-[3px] h-[16px] w-[77px] border-l border-[#696969] pt-[3px] pl-[5px] tracking-[-0.57px]">MLPT left=0m</span>
        <span className="mt-[2px] h-[16px] border-l border-[#696969] pt-[3px] pl-[4px] tracking-[-0.45px]">{"Configuration  in use"}</span>
        <span className="mt-[8px] ml-auto"><Grip /></span>
      </div>
      <div className="flex h-[22px] items-start border-t border-white">
        <span className={`${cell} ml-[3px] w-[73px] pl-[5px] tracking-[-0.59px]`}>PierSide East</span>
        <span className={`${cell} ml-px w-[95px] pl-[6px] tracking-[-0.62px]`}>Time to Limit=31m</span>
        <span className={`${cell} ml-px w-[61px] border-r-[#ff0000] border-b-[#ff0000] bg-[#ff0000] pl-[5px] tracking-[-0.48px] text-[#300000]`}>GPS 0 Sat</span>
        <span className={`${cell} w-[52px] pl-[6px] tracking-[-0.47px]`}>18:31:30</span>
        <span className={`${cell} ml-px w-[55px] border-r-[#00ff00] border-b-[#00ff00] bg-[#00ff00] pl-[5px] tracking-[-0.65px]`}>Limits OK</span>
        <span className="mt-[8px] ml-auto"><Grip /></span>
      </div>
    </div>
  );
}

function AutoslewWindow() {
  return (
    <div className="absolute top-[174px] left-[387px] flex h-[539px] w-[767px] flex-col border border-[#3a3a3a] bg-[#f0f0f0] text-black">
      <TitleBar />
      <MenuBar />
      <Toolbar />
      <div className={`flex grow flex-col ${SANS}`}>
        <div className="mt-[16px] flex pl-[13px]">
          <TelescopeGroup />
          <ObjectsGroup />
        </div>
        <MotorRow />
        <div className="mt-[13px] mb-auto flex pl-[13px]">
          <MessagesGroup />
          <MoveGroup />
        </div>
        <StatusBars />
      </div>
    </div>
  );
}

/* ---------- TeamViewer session panel ---------- */

function TeamViewerPanel() {
  return (
    <div className="absolute top-[653px] left-[1324px] flex">
      <svg className="mt-[104px]" width="25" height="54" viewBox="0 0 25 54">
        <path d="M25 0H4a4 4 0 0 0-4 4v32c0 2 1 3 3 4l22 13Z" fill="#fff" />
        <path d="m11.500 11.500 4.500 4.500-4.500 4.500" fill="none" stroke="#6d8299" strokeWidth="2" />
      </svg>
      <div className="flex h-[207px] w-[251px] flex-col border border-[#d5dde3] bg-white">
        <div className="h-[103px] bg-[#0064c8]">
          <div className="flex items-start pt-[8px] pl-[8px] text-white">
            <svg width="40" height="40" viewBox="0 0 48 48"><TeamViewerMark bg="#0a97f5" /></svg>
            <div className="mt-[6px] ml-[15px] flex text-[22px] leading-[30px]">
              <span className="w-[56px] font-bold tracking-[-1.3px]">Team</span>
              <span className="w-[70px] tracking-[-0.3px]">Viewer</span>
            </div>
            <svg className="mt-[15px] ml-[31px]" width="14" height="14" stroke="#fff" strokeWidth="3">
              <path d="m2 2 10 10M12 2 2 12" />
            </svg>
          </div>
          <div className="mt-[21px] flex items-center pl-[12px]">
            <svg width="190" height="20" viewBox="0 0 190 20" fill="#fff">
              <path d="M1 5h11v11H1zM13 9l4-3.500v9.500L13 12z" />
              <path d="M37 12V9a6 6 0 0 1 12 0v3" fill="none" stroke="#fff" strokeWidth="1.500" />
              <path d="M35 9h3v6h-3zM48 9h3v6h-3z" />
              <path d="M49.500 15c0 2-2 3-5 3" fill="none" stroke="#fff" strokeWidth="1.500" />
              <rect x="42" y="16" width="4" height="3" />
              <path d="M69 3h12v8h-7l-3 3v-3h-2zM82.500 7H85v8h-1v3l-3.500-3H75v-2h7.500z" />
              <path d="M104 3h10v2h-7v12h-3v-2h1v-2h-1v-2h1V9h-1V7h1V5h-1z" />
              <path d="M108.500 6h9.500v12h-9.500zm2 2.500v1h5.500v-1zm0 3v1h5.500v-1zm0 3v1h4v-1z" fillRule="evenodd" />
              <path d="m153 3-6 5-1-1-2 2 4 4 2-2-1-1 5-6ZM143 10l4 4-4 5-6-5 2-1 1-1.500Z" />
              <path d="m178 6-4.500 4.500 4.500 4.500M184 6l-4.500 4.500 4.500 4.500" fill="none" stroke="#fff" strokeWidth="1.800" />
            </svg>
          </div>
        </div>
        <div className="flex h-[30px] items-center pl-[5px]">
          <svg width="10" height="7"><path d="M0 0h10L5 7Z" fill="#6d8299" /></svg>
          <span className="mt-px ml-[5px] text-[14px] leading-[20px] tracking-[-0.48px] text-[#222222]">Session list</span>
          <svg className="mr-[6px] -mt-[2px] ml-auto" width="17" height="12" viewBox="0 0 17 12">
            <circle cx="5.500" cy="6" r="3" fill="none" stroke="#6d8299" strokeWidth="2.200" />
            <path d="M5.500.500v2M5.500 9.500v2M0 6h2M9 6h2M1.700 2.200 3 3.500M8 8.500l1.300 1.300M1.700 9.800 3 8.500M8 3.500l1.300-1.300" stroke="#6d8299" strokeWidth="1.800" />
            <path d="M12 5h5l-2.500 3Z" fill="#6d8299" />
          </svg>
        </div>
        <div className="flex h-[45px] items-start pt-[11px] pl-[7px]">
          <svg width="18" height="18" viewBox="0 0 18 18">
            <rect x=".500" y=".500" width="17" height="17" fill="#fff" stroke="#c9cdd0" />
            <path d="M2 7c0-2 2-3 4-2 2-1 4-1 6 0 2-1 4 0 4 2 0 6-3 9-7 9s-7-3-7-9Z" fill="#3a3a3a" />
            <g fill="#fff" stroke="#555" strokeWidth=".7">
              <circle cx="4.700" cy="5.700" r="2.600" />
              <circle cx="13.300" cy="5.700" r="2.600" />
            </g>
            <circle cx="5.500" cy="6" r=".9" />
            <circle cx="13" cy="6" r=".9" />
          </svg>
          <span className="mt-[2px] ml-[4px] w-[178px] text-[11px] leading-[15px] tracking-[-0.52px] whitespace-nowrap text-[#111111]">Mohammad Shameoni Niaei (811 705</span>
          <svg className="mt-[5px] ml-[5px]" width="10" height="7"><path d="M0 0h10L5 7Z" fill="#b9c4d2" /></svg>
          <svg className="mt-[3px] ml-[5px]" width="13" height="13"><path d="m0 0 12 4.500-4.500 2 5 4.500-2 2-4.500-5-2 4.500Z" fill="#3fa1f5" /></svg>
        </div>
        <div className="flex grow items-center justify-end bg-[#3f3f3f] pr-[9px] pb-[2px]">
          <span className="text-[12px] leading-[16px] tracking-[-0.32px] text-white underline">www.teamviewer.com</span>
        </div>
      </div>
    </div>
  );
}

/* ---------- taskbar ---------- */

function Taskbar() {
  return (
    <div className="absolute top-[860px] left-0 flex h-[40px] w-[1600px] items-center bg-[#0a0a0a]">
      <svg className="ml-[16px]" width="16" height="16" fill="#fff">
        <path d="m0 2.300 6.500-.9v6.100H0zM7.300 1.300 16 0v7.500H7.300zM0 8.300h6.500v6.300L0 13.700zM7.300 8.300H16V16l-8.700-1.300z" />
      </svg>
      <svg className="ml-[32px]" width="22" height="18" viewBox="0 0 22 18">
        <path d="M0 0h9l2 2h10.500v15.500H0Z" fill="#fbe38d" />
        <path d="M0 0h9l2 2h-6v1H0Z" fill="#f0b62c" />
        <path d="M4 18v-8h14v8h-4v-4H8v4Z" fill="#37aee6" />
      </svg>
      <svg className="ml-[26px]" width="24" height="24" viewBox="0 0 48 48"><ChromeMark /></svg>
      <div className="ml-[17px] flex h-[40px] w-[40px] flex-col items-center">
        <svg className="mt-[7px]" width="24" height="24" viewBox="6 1 44 46"><AutoslewMark /></svg>
        <div className="mt-auto h-[2px] w-[40px] bg-[#76b9ed]" />
      </div>
      <svg className="ml-auto" width="16" height="16" viewBox="0 0 48 48"><TeamViewerMark /></svg>
      <svg className="ml-[8px]" width="15" height="15" viewBox="0 0 15 15">
        <circle cx="7.500" cy="7.500" r="7.300" fill="#f0b45c" />
        <path d="M.3 8C3 4.500 6 5 8.500 7s4 2 6.200 1a7.300 7.300 0 0 1-14.400 0Z" fill="#7d94c4" />
      </svg>
      <svg className="ml-[9px]" width="16" height="16" viewBox="0 0 16 16">
        <path d="M9.500 1.500c2-1 4-1.500 5-.5s.5 2.500 0 4-.5 2.500 0 4 1.500 3 .5 4.500-3 .5-5 0-3-.5-5 .5-4 1.500-4.500 0 .5-2.500 1-4S-.5 6.500.5 5s3 0 5-1 2-1.500 4-2.500Z" fill="#ff7800" />
        <circle cx="7.300" cy="8" r="2.300" fill="none" stroke="#fff" strokeWidth="1.500" />
        <path d="M10 5.300v5.200" stroke="#fff" strokeWidth="1.500" />
      </svg>
      <svg className="ml-[11px]" width="14" height="17" viewBox="0 0 14 17" fill="none" stroke="#fff">
        <path d="M2.500 5V.500h6V5M1.500 5.500h8v6M1.500 5.500v10h5M4.500 2v1M6.500 2v1" />
        <path d="m7 13.500 2 2 4-5" stroke="#aaa" />
      </svg>
      <svg className="ml-[9px]" width="16" height="16" viewBox="0 0 16 16">
        <path d="M7 0c2 1.500 4 2 7 2v5c0 4-3 6-7 8-4-2-7-4-7-8V2c3 0 5-.5 7-2Z" fill="#fff" />
        <path d="M7 0v15M0 7h14" stroke="#0a0a0a" />
        <circle cx="11" cy="11" r="4.700" fill="#1c9a4c" />
        <path d="m8.700 11 1.700 1.700 3-3.200" fill="none" stroke="#fff" strokeWidth="1.200" />
      </svg>
      <svg className="ml-[7px]" width="16" height="14" viewBox="0 0 16 14">
        <path d="m0 10 5-3M8 6l3-5 3 1M4 9l1 3" stroke="#a9a9a9" strokeWidth="1.600" fill="none" />
        <path d="m5 5 4-1 3 3-3 4-3-1Z" fill="#d2392f" />
        <circle cx="12.800" cy="8.500" r="2.200" fill="#8a8a8a" />
        <circle cx="3" cy="10" r="1.800" fill="#8a5a58" />
      </svg>
      <svg className="ml-[8px]" width="17" height="14" viewBox="0 0 17 14" fill="none" stroke="#fff">
        <path d="M5.500 1.500h11v8h-11M10.500 10v3M7 13.500h7M.5 1h4v3.500H.5zM2.500 5v6.500h4" />
      </svg>
      <svg className="ml-[7px]" width="17" height="14" viewBox="0 0 17 14" fill="none" stroke="#fff">
        <path d="M.5 4.500h2.500L6.500 1v12L3 9.500H.5zM8.500 4.500c1 1.500 1 3.500 0 5M10.500 3c2 2.500 2 5.500 0 8" />
        <path d="M12.500 1c3 4 3 8 0 12" stroke="#777" />
      </svg>
      <div className="ml-[3px] flex w-[72px] flex-col items-center text-[12px] leading-[18px] text-white">
        <span className="tracking-[-0.92px]">18:31</span>
        <span className="tracking-[-0.62px]">15/09/2018</span>
      </div>
      <svg className="ml-[9px]" width="17" height="17" viewBox="0 0 17 17" fill="none" stroke="#fff">
        <path d="M.5 1.500h16v11h-5l-3 3-3-3h-5Z" />
      </svg>
      <div className="mr-[4px] ml-[19px] h-[40px] w-px bg-[#5a5a5a]" />
    </div>
  );
}

export default function App() {
  return (
    <div className={`relative h-[900px] w-[1600px] overflow-hidden bg-black ${SEGOE}`}>
      {shortcuts.map((s) => (
        <DesktopIcon key={s.left + s.top} {...s} />
      ))}
      <AutoslewWindow />
      <Taskbar />
      <TeamViewerPanel />
    </div>
  );
}
